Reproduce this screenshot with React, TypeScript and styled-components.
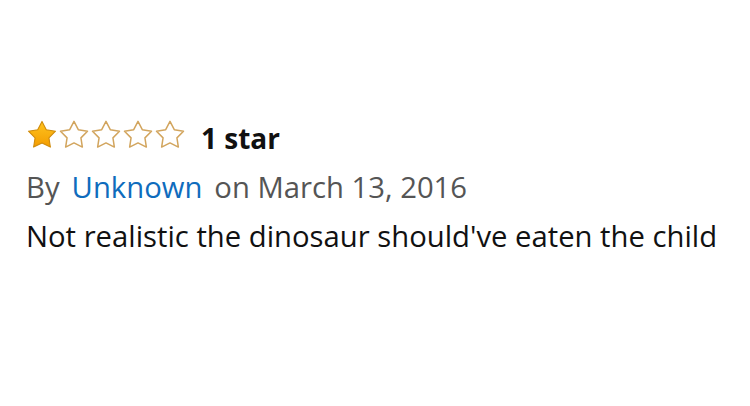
import React from "react";
import styled, { createGlobalStyle } from "styled-components";

const GlobalStyle = createGlobalStyle`
  html, body { margin: 0; padding: 0; background: #ffffff; }
  body { font-family: "Open Sans", "Noto Sans", sans-serif; }
`;

const Review = styled.section`
  padding: 120px 20px 0 26px;
  display: flex;
  flex-direction: column;
`;

const RatingRow = styled.div`
  display: flex;
  align-items: flex-start;
  height: 36px;
`;

const Stars = styled.div`
  display: flex;
  gap: 4px;
  margin-top: 1px;
  margin-left: 2px;
`;

const StarIcon = styled.svg`
  display: block;
  overflow: visible;
`;

const StarTitle = styled.span`
  font-size: 28px;
  font-weight: 700;
  line-height: 36px;
  color: #111111;
  margin-left: 17px;
`;

const Byline = styled.div`
  margin-top: 13px;
  font-size: 29.25px;
  line-height: 36px;
  color: #555555;
  white-space: nowrap;
`;

const Author = styled.a`
  color: #0f6cbd;
  text-decoration: none;
  margin: 0 12px;
`;

const Body = styled.p`
  margin: 13px 0 0;
  font-size: 29.25px;
  line-height: 36px;
  color: #111111;
  white-space: nowrap;
`;

function starPath(cx: number, cy: number, R: number, r: number) {
  const pts: string[] = [];
  for (let i = 0; i < 10; i++) {
    const a = ((-90 + i * 36) * Math.PI) / 180;
    const rad = i % 2 === 0 ? R : r;
    pts.push(`${(cx + rad * Math.cos(a)).toFixed(2)} ${(cy + rad * Math.sin(a)).toFixed(2)}`);
  }
  return "M" + pts.join(" L") + " Z";
}

const STAR = starPath(14, 14.6, 14.2, 7.3);

function Star({ filled }: { filled: boolean }) {
  return (
    <StarIcon width="28" height="26" viewBox="0 0 28 26" aria-hidden="true">
      <defs>
        <linearGradient id="gold" x1="0" y1="0" x2="0" y2="1">
          <stop offset="0" stopColor="#ffc41f" />
          <stop offset="1" stopColor="#f39c00" />
        </linearGradient>
      </defs>
      <path
        d={STAR}
        fill={filled ? "url(#gold)" : "#ffffff"}
        stroke={filled ? "#cf8b0c" : "#d2a55e"}
        strokeWidth={filled ? 1.1 : 1.5}
        strokeLinejoin="round"
      />
    </StarIcon>
  );
}

export default function App() {
  const rating = 1;
  return (
    <>
      <GlobalStyle />
      <Review>
        <RatingRow>
          <Stars>
            {[1, 2, 3, 4, 5].map((i) => (
              <Star key={i} filled={i <= rating} />
            ))}
          </Stars>
          <StarTitle>1 star</StarTitle>
        </RatingRow>
        <Byline>
          By<Author href="#">Unknown</Author>on March 13, 2016
        </Byline>
        <Body>Not realistic the dinosaur should've eaten the child</Body>
      </Review>
    </>
  );
}
